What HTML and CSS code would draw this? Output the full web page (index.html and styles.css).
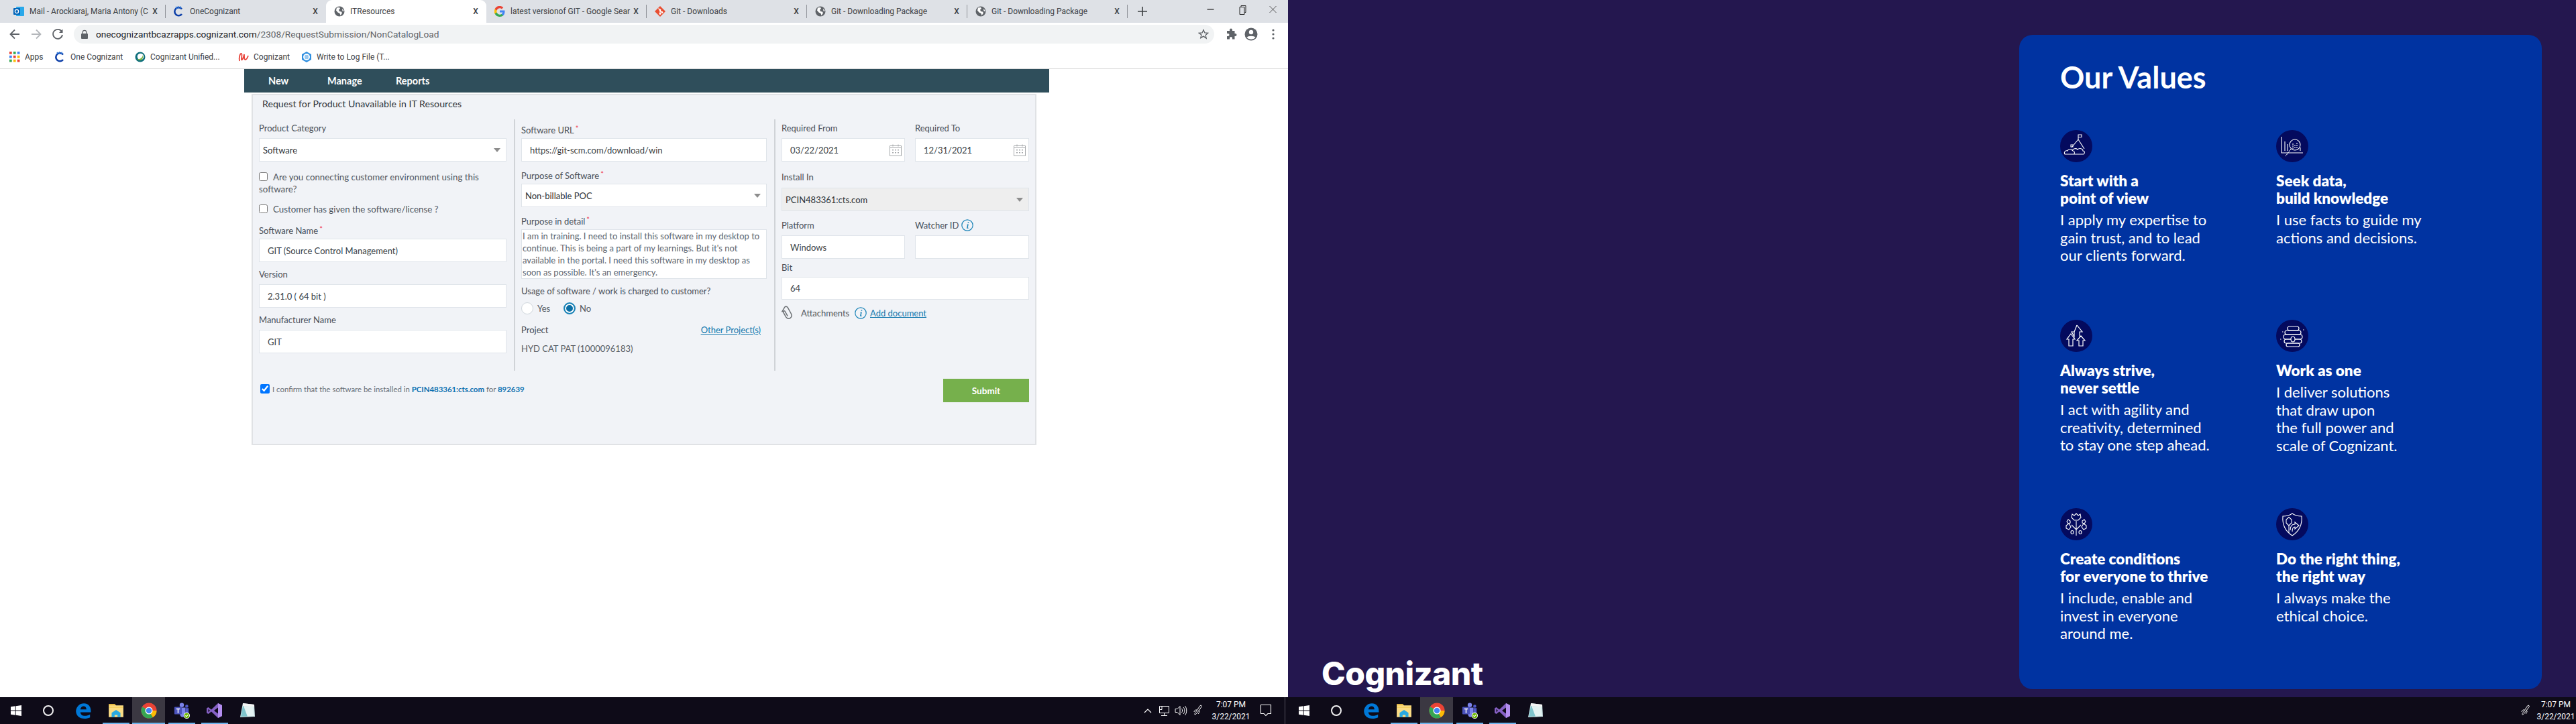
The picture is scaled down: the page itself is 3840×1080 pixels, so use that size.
FILE: index.html
```html
<!DOCTYPE html>
<html lang="en">
<head>
<meta charset="utf-8">
<title>ITResources and Our Values</title>
<link rel="stylesheet" href="styles.css">
</head>
<body>
<svg class="sprite" xmlns="http://www.w3.org/2000/svg">
  <symbol id="globe" viewBox="0 0 16 16"><circle cx="8" cy="8" r="7.5" fill="#5f6368"/><path d="M4 2.5 8 2l1 2-2 1.500 1 2.500 3 .5 1 2-2.500 3.500-1-3-3-1.500L3 6.500zM12 4l2 2 .5 2-2-.5z" fill="#fff"/></symbol>
  <symbol id="cog" viewBox="0 0 16 16"><path d="M12 4.500A6 6 0 1 0 12 12" fill="none" stroke="#0d3fa8" stroke-width="2.600"/><path d="M3 1l2 3M6.500 0l.5 3.500M10.500 .5 9.500 3.500" stroke="#2f7de0" stroke-width="1.400"/></symbol>
  <symbol id="win" viewBox="0 0 16 16"><path d="M0 2.300 6.800 1.300V7.500H0zM7.700 1.200 16 0V7.500H7.700zM0 8.400H6.800V14.700L0 13.700zM7.700 8.400H16V16L7.700 14.800z" fill="#fff"/></symbol>
  <symbol id="edge" viewBox="0 0 20 20"><path d="M1 10.500C1.500 5 5.500 1 11 1c5 0 8.500 3.500 8.500 9.500V12H6.500c.3 3 2.500 4.500 5.500 4.500 2.500 0 4.500-.6 6.500-1.800v3.800c-2 1-4.300 1.500-7 1.500C5.500 20 1 16.500 1 10.500zM6.500 8.500h7.500c0-2.500-1.300-4-3.500-4-2 0-3.600 1.500-4 4z" fill="#0078d7"/></symbol>
  <symbol id="folder" viewBox="0 0 22 20"><path d="M1 1h8l2 2h10v16H1z" fill="#fbdc85"/><path d="M1 1h8l2 2H1z" fill="#e8b93e"/><path d="M1 5h20v1H1z" fill="#f2c94e"/><path d="M5 13l6-4 6 4v6h-4v-3H9v3H5z" fill="#29a9e1"/></symbol>
  <symbol id="chrome" viewBox="0 0 24 24"><circle cx="12" cy="12" r="11.500" fill="#ea4335"/><path d="M12 12 2 17.700A11.500 11.500 0 0 1 2 6.300z" fill="#34a853"/><path d="M2 17.700 12 12l5.800 10A11.500 11.500 0 0 1 2 17.700z" fill="#34a853"/><path d="M12 12h11.500a11.500 11.500 0 0 1-5.700 10z" fill="#fbbc05"/><circle cx="12" cy="12" r="5.500" fill="#fff"/><circle cx="12" cy="12" r="4.200" fill="#4285f4"/></symbol>
  <symbol id="teams" viewBox="0 0 26 26"><circle cx="13" cy="4" r="3.500" fill="#7b83eb"/><circle cx="21" cy="6" r="2.500" fill="#5059c9"/><path d="M10 8h9v11a4.500 4.500 0 0 1-9 0z" fill="#7b83eb"/><path d="M19 9h5v7a3 3 0 0 1-5 2z" fill="#5059c9"/><rect x="1" y="7" width="12" height="12" rx="1" fill="#4b53bc"/><path d="M4 9.500h6v1.500H7.800V17H6.200v-6H4z" fill="#fff"/><circle cx="21" cy="21" r="5" fill="#fff"/><circle cx="21" cy="21" r="4" fill="#6bb700"/><path d="M18.800 21l1.600 1.600 2.800-3" fill="none" stroke="#fff" stroke-width="1.200"/></symbol>
  <symbol id="vs" viewBox="0 0 24 24"><path d="M17 1l6 3v16l-6 3-10-9.500L2.500 17 0 15.500v-7L2.500 7 7 10.500zM17 7.500 11 12l6 4.500zM2.500 9.800v4.400L5 12z" fill="#8661c5"/><path d="M17 1l6 3v16l-6 3z" fill="#b48ef0"/></symbol>
  <symbol id="notes" viewBox="0 0 24 24"><path d="M5 1 22 3 23 21 1 22z" fill="#cfe6e8"/><path d="M5 5 21 6.500 22 20 2 21z" fill="#7fc4cc"/><path d="M6 5 21 6.500 22 20 12 21z" fill="#e3f2f2"/><path d="M5 1 22 3v3.500L5 5z" fill="#f4f4f4"/></symbol>
  <symbol id="pen" viewBox="0 0 16 18"><path d="M11 1.500c1.500-1 3 .5 2 2L6 13c-1 1.300-2.500 2.300-3 1.800-.6-.5.300-2 1.300-3.300zM6 8c-2-.5-4 1-4 3M9 9c2 0 1 3-1 5" fill="none" stroke="#fff" stroke-width="1"/></symbol>
  <symbol id="cal" viewBox="0 0 18 18"><path d="M.5 2.500h17v15H.5z" fill="none" stroke="#a5a8ab"/><path d="M.5 5.500h17M5 .5v3M13 .5v3" stroke="#a5a8ab"/><path d="M4 8h2v1.500H4zM8 8h2v1.500H8zM12 8h2v1.500h-2zM4 12h2v1.500H4zM8 12h2v1.500H8zM12 12h2v1.500h-2z" fill="#a5a8ab"/></symbol>
  <symbol id="info" viewBox="0 0 18 18"><circle cx="9" cy="9" r="8.200" fill="none" stroke="#1b84b8" stroke-width="1.200"/><path d="M9.800 4.200h1.600l-.3 1.600H9.500zM9 7.500h1.800l-1.100 5.200h1.100l-.2 1H7.900l1.100-5.200H8z" fill="#1b84b8"/></symbol>
</svg>

<section class="screen">
  <div class="browser">
    <div class="tabstrip">
      <div class="tab sep">
        <svg class="tab-icon" viewBox="0 0 16 16"><rect x="4" y="1" width="12" height="14" rx="1" fill="#28a8ea"/><rect y="3" width="10" height="10" rx="1" fill="#0364b8"/><circle cx="5" cy="8" r="2.600" fill="none" stroke="#fff" stroke-width="1.300"/></svg>
        <span class="tab-title">Mail - Arockiaraj, Maria Antony (C</span><span class="tab-close">X</span>
      </div>
      <div class="tab">
        <svg class="tab-icon"><use href="#cog"/></svg>
        <span class="tab-title">OneCognizant</span><span class="tab-close">X</span>
      </div>
      <div class="tab active">
        <svg class="tab-icon"><use href="#globe"/></svg>
        <span class="tab-title">ITResources</span><span class="tab-close">X</span>
      </div>
      <div class="tab sep">
        <svg class="tab-icon" viewBox="0 0 16 16"><path d="M15.500 8.200c0-.6 0-1.100-.1-1.600H8v3h4.300a3.700 3.700 0 0 1-1.600 2.400v2h2.600c1.500-1.400 2.200-3.400 2.200-5.800z" fill="#4285f4"/><path d="M8 16c2.200 0 4-.7 5.300-2l-2.600-2c-.7.500-1.600.8-2.700.8-2 0-3.800-1.400-4.400-3.200H.6v2A8 8 0 0 0 8 16z" fill="#34a853"/><path d="M3.600 9.600a4.700 4.700 0 0 1 0-3.100v-2H.6a8 8 0 0 0 0 7.100z" fill="#fbbc05"/><path d="M8 3.200c1.200 0 2.200.4 3 1.200L13.300 2A8 8 0 0 0 .6 4.500l3 2.100C4.200 4.700 6 3.200 8 3.200z" fill="#ea4335"/></svg>
        <span class="tab-title">latest versionof GIT - Google Sear</span><span class="tab-close">X</span>
      </div>
      <div class="tab sep">
        <svg class="tab-icon" viewBox="0 0 16 16"><path d="M8 0l8 8-8 8-8-8z" fill="#e84e31"/><path d="M5.500 3.500 8 6v5M8 7l3 2.500" stroke="#fff" stroke-width="1.200" fill="none"/><circle cx="8" cy="11.500" r="1.400" fill="#fff"/><circle cx="11" cy="9.500" r="1.400" fill="#fff"/><circle cx="8" cy="6" r="1.400" fill="#fff"/></svg>
        <span class="tab-title">Git - Downloads</span><span class="tab-close">X</span>
      </div>
      <div class="tab sep">
        <svg class="tab-icon"><use href="#globe"/></svg>
        <span class="tab-title">Git - Downloading Package</span><span class="tab-close">X</span>
      </div>
      <div class="tab sep">
        <svg class="tab-icon"><use href="#globe"/></svg>
        <span class="tab-title">Git - Downloading Package</span><span class="tab-close">X</span>
      </div>
      <svg class="new-tab" viewBox="0 0 14 14"><path d="M7 0v14M0 7h14" stroke="#3c4043" stroke-width="1.600"/></svg>
      <div class="win-controls">
        <svg class="win-btn" viewBox="0 0 45 28"><path d="M17 14h10" stroke="#222" stroke-width="1.200"/></svg>
        <svg class="win-btn" viewBox="0 0 45 28"><path d="M19.500 10.500h7v11h-7zM21.500 10V8.500h7v10H27" fill="none" stroke="#222"/></svg>
        <svg class="win-btn" viewBox="0 0 45 28"><path d="M18 9l10 10M28 9 18 19" stroke="#444" stroke-width=".9"/></svg>
      </div>
    </div>

    <div class="toolbar">
      <svg class="tb-slot" viewBox="0 0 32 34"><path d="M23 17H10M16 10.500 9.500 17l6.500 6.500" fill="none" stroke="#5f6368" stroke-width="1.800"/></svg>
      <svg class="tb-slot" viewBox="0 0 32 34"><path d="M9 17h13M16 10.500l6.500 6.500-6.500 6.500" fill="none" stroke="#b4b7bb" stroke-width="1.800"/></svg>
      <svg class="tb-slot" viewBox="0 0 32 34"><path d="M22.500 14a7 7 0 1 0 .5 4" fill="none" stroke="#5f6368" stroke-width="1.800"/><path d="M23.500 9.500V15H18z" fill="#5f6368"/></svg>
      <div class="omnibox">
        <svg class="lock" viewBox="0 0 12 14"><rect x="1" y="6" width="10" height="8" rx="1" fill="#5f6368"/><path d="M3.300 6.500V4a2.700 2.700 0 0 1 5.400 0v2.500" fill="none" stroke="#5f6368" stroke-width="1.300"/></svg>
        <span class="url"><span class="url-host">onecognizantbcazrapps.cognizant.com</span>/2308/RequestSubmission/NonCatalogLoad</span>
        <svg class="star" viewBox="0 0 16 16"><path d="M8 1.500l1.900 4.400 4.800.4-3.600 3.100 1.100 4.700L8 11.100l-4.200 2.500 1.100-4.700L1.300 6.300l4.800-.4z" fill="none" stroke="#5f6368" stroke-width="1.300"/></svg>
      </div>
      <svg class="puzzle" viewBox="0 0 30 34"><path d="M10 12h4v-1.500a2 2 0 0 1 4 0V12h3.500v4h1a2 2 0 0 1 0 4h-1v4.500H18V23a2 2 0 0 0-4 0v1.500h-4V20h1.500a2 2 0 0 0 0-4H10z" fill="#5f6368"/></svg>
      <svg class="avatar" viewBox="0 0 32 34"><circle cx="16" cy="17" r="9.500" fill="#5f6368"/><circle cx="16" cy="14" r="3.200" fill="#fff"/><path d="M9.500 22c1.500-3 11.500-3 13 0a9 9 0 0 1-13 0z" fill="#fff"/></svg>
      <svg class="menu" viewBox="0 0 34 34"><circle cx="17" cy="11" r="1.600" fill="#5f6368"/><circle cx="17" cy="17" r="1.600" fill="#5f6368"/><circle cx="17" cy="23" r="1.600" fill="#5f6368"/></svg>
    </div>

    <div class="bookmarks">
      <div class="bm bm-apps">
        <svg class="bm-icon" viewBox="0 0 15 15"><path d="M0 0h3.500v3.500H0z" fill="#ea4335"/><path d="M5.500 0H9v3.500H5.500z" fill="#34a853"/><path d="M11 0h3.500v3.500H11z" fill="#4285f4"/><path d="M0 5.500h3.500V9H0z" fill="#4285f4"/><path d="M5.500 5.500H9V9H5.500z" fill="#ea4335"/><path d="M11 5.500h3.500V9H11z" fill="#fbbc05"/><path d="M0 11h3.500v3.500H0z" fill="#34a853"/><path d="M5.500 11H9v3.500H5.500z" fill="#fbbc05"/><path d="M11 11h3.500v3.500H11z" fill="#ea4335"/></svg>
        <span>Apps</span>
      </div>
      <div class="bm bm-one"><svg class="bm-icon"><use href="#cog"/></svg><span>One Cognizant</span></div>
      <div class="bm bm-unified">
        <svg class="bm-icon" viewBox="0 0 16 16"><circle cx="8" cy="8" r="7.500" fill="#0f6f7c"/><circle cx="8.500" cy="7.500" r="4.800" fill="#fff"/><path d="M4 11c3 1 7-1 8-6 1 4-1 8-4 8s-4-1-4-2z" fill="#7bb642"/></svg>
        <span>Cognizant Unified...</span>
      </div>
      <div class="bm bm-cog">
        <svg class="bm-icon" viewBox="0 0 16 16"><path d="M2 14C1 8 3 2 5 3c1.500 1-.5 7 0 9 .5 1.500 3-2 4-8 0 5 0 8 1.500 8S14 9 15 6" fill="none" stroke="#e8453c" stroke-width="1.800"/></svg>
        <span>Cognizant</span>
      </div>
      <div class="bm bm-log">
        <svg class="bm-icon" viewBox="0 0 16 16"><path d="M8 0l7 4v8l-7 4-7-4V4z" fill="#2f8fe0"/><circle cx="8" cy="8" r="5" fill="#fff"/><path d="M5 8h6M5.500 6h5M5.500 10h5" stroke="#2f8fe0"/></svg>
        <span>Write to Log File (T...</span>
      </div>
    </div>

    <nav class="appnav">
      <a class="nav-new">New</a>
      <a class="nav-manage">Manage</a>
      <a>Reports</a>
    </nav>

    <main class="panel">
      <h2 class="panel-title">Request for Product Unavailable in IT Resources</h2>
      <div class="cols">
        <div class="col col-first">
          <label class="lbl">Product Category</label>
          <div class="field select">Software</div>
          <div class="check-line first-check"><input type="checkbox" class="chk"><span class="check-gap">Are you connecting customer environment using this</span><br>software?</div>
          <div class="check-line second-check"><input type="checkbox" class="chk"><span class="check-gap">Customer has given the software/license ?</span></div>
          <label class="lbl gap-7">Software Name<i class="req">*</i></label>
          <div class="field">GIT (Source Control Management)</div>
          <label class="lbl gap-5">Version</label>
          <div class="field">2.31.0 ( 64 bit )</div>
          <label class="lbl gap-5">Manufacturer Name</label>
          <div class="field">GIT</div>
        </div>

        <div class="col col-mid">
          <label class="lbl">Software URL<i class="req">*</i></label>
          <div class="field">https://git-scm.com/download/win</div>
          <label class="lbl gap-5">Purpose of Software<i class="req">*</i></label>
          <div class="field select">Non-billable POC</div>
          <label class="lbl gap-5">Purpose in detail<i class="req">*</i></label>
          <div class="detail">I am in training. I need to install this software in my desktop to continue. This is being a part of my learnings. But it's not available in the portal. I need this software in my desktop as soon as possible. It's an emergency.</div>
          <label class="lbl gap-5">Usage of software / work is charged to customer?</label>
          <div class="radios">
            <span class="radio"></span><span class="radio-text">Yes</span>
            <span class="radio on"></span><span class="radio-text">No</span>
          </div>
          <div class="project-row"><span>Project</span><a class="link">Other Project(s)</a></div>
          <div class="project-name">HYD CAT PAT (1000096183)</div>
        </div>

        <div class="col col-last">
          <div class="pair">
            <div class="half-a">
              <label class="lbl">Required From</label>
              <div class="field date">03/22/2021<svg class="cal"><use href="#cal"/></svg></div>
            </div>
            <div class="half-b">
              <label class="lbl">Required To</label>
              <div class="field date">12/31/2021<svg class="cal"><use href="#cal"/></svg></div>
            </div>
          </div>
          <label class="lbl install-lbl">Install In</label>
          <div class="field select disabled">PCIN483361:cts.com</div>
          <div class="pair gap-8">
            <div class="half-a">
              <label class="lbl">Platform</label>
              <div class="field">Windows</div>
            </div>
            <div class="half-b">
              <label class="lbl">Watcher ID <svg class="info"><use href="#info"/></svg></label>
              <div class="field"></div>
            </div>
          </div>
          <label class="lbl bit-lbl">Bit</label>
          <div class="field bit">64</div>
          <div class="attach">
            <svg class="clip" viewBox="0 0 18 22"><path d="M3 8l5.500-6c1.500-1.500 4-.3 4.500 1.500l3 10c.7 2.500-.5 5-2.500 6-2.500 1-5 0-6-2.500L5 9c-.5-1.500 2-2.500 2.700-1l2.500 8" fill="none" stroke="#6b6f73" stroke-width="1.500" transform="rotate(-12 9 11)"/></svg>
            <span class="attach-text">Attachments</span>
            <svg class="info attach-info"><use href="#info"/></svg>
            <a class="link">Add document</a>
          </div>
        </div>
      </div>

      <div class="panel-foot">
        <div class="confirm">
          <input type="checkbox" class="chk-on" checked>
          <span>I confirm that the software be installed in <b class="hl">PCIN483361:cts.com</b> for <b class="hl">892639</b></span>
        </div>
        <button class="submit" type="button">Submit</button>
      </div>
    </main>
  </div>

  <footer class="taskbar">
    <div class="tb-app start"><svg class="i-win"><use href="#win"/></svg></div>
    <div class="tb-app cortana"><span class="ring"></span></div>
    <div class="tb-app tb-first"><svg class="i-app"><use href="#edge"/></svg></div>
    <div class="tb-app open"><svg class="i-app"><use href="#folder"/></svg></div>
    <div class="tb-app current"><svg class="i-app"><use href="#chrome"/></svg></div>
    <div class="tb-app open"><svg class="i-app"><use href="#teams"/></svg></div>
    <div class="tb-app open"><svg class="i-app"><use href="#vs"/></svg></div>
    <div class="tb-app"><svg class="i-app"><use href="#notes"/></svg></div>
    <div class="tray">
      <svg class="tray-i" viewBox="0 0 24 20"><path d="M7 13l5-5 5 5" fill="none" stroke="#fff" stroke-width="1.200"/></svg>
      <svg class="tray-i" viewBox="0 0 24 20"><path d="M5.500 3.500h14v10h-14zM9 3.500v5H5.500M12.500 13.500v4M8 17.500h9" fill="none" stroke="#fff"/></svg>
      <svg class="tray-i" viewBox="0 0 24 20"><path d="M5 7.500h3l4-4v13l-4-4H5zM14.500 7c1.500 2 1.500 4 0 6M17 5c2.500 3 2.500 7 0 10M19.500 3c3 4 3 10 0 14" fill="none" stroke="#fff"/></svg>
      <svg class="tray-pen"><use href="#pen"/></svg>
      <div class="clock"><span>7:07 PM</span><span>3/22/2021</span></div>
      <svg class="tray-note" viewBox="0 0 36 22"><path d="M10.500 2.500h15v13h-4.500l-3 3-3-3h-4.500z" fill="none" stroke="#fff" stroke-width="1.100"/></svg>
      <span class="desktop-sep"></span>
    </div>
  </footer>
</section>

<section class="screen">
  <div class="slide">
    <div class="logo">Cognizant</div>
    <article class="card">
      <h1 class="card-title">Our Values</h1>
      <div class="values">
        <div class="value">
          <svg class="badge" viewBox="0 0 48 48"><circle cx="24" cy="24" r="24" fill="#040a5e"/><g fill="none" stroke="#fff" stroke-width="1.100"><path d="M27 14V7h5v3.500h-5M27 14l9 14M27 14 17 26M19 25h-3v-3h3z"/><path d="M7 36c-2-3 1-6 4-5 1-3 6-3 8 0 2 0 3 2 2 5zM18 31c1-4 6-4 8-2 3-3 8-1 8 2 3 0 3 4 1 5H21"/></g></svg>
          <h3>Start with a<br>point of view</h3>
          <p>I apply my expertise to<br>gain trust, and to lead<br>our clients forward.</p>
        </div>
        <div class="value">
          <svg class="badge" viewBox="0 0 48 48"><circle cx="24" cy="24" r="24" fill="#040a5e"/><g fill="none" stroke="#fff" stroke-width="1.100"><path d="M8 10v24h32M13 17v14M17 21v10M36 26v5"/><circle cx="28" cy="22" r="8"/><path d="M22 28 14 39M25 20v8M28 22v6M31 19v9" stroke-dasharray="2 1"/></g></svg>
          <h3>Seek data,<br>build knowledge</h3>
          <p>I use facts to guide my<br>actions and decisions.</p>
        </div>
        <div class="value">
          <svg class="badge" viewBox="0 0 48 48"><circle cx="24" cy="24" r="24" fill="#040a5e"/><g fill="none" stroke="#fff" stroke-width="1.200"><path d="M25 8l8 10h-4v7M21 25v-7h-4zM21 18l4-10"/><path d="M16 21l6 8h-3v10h-6V29h-3zM31 24l6 7h-3v8h-6v-8h-3z"/></g></svg>
          <h3>Always strive,<br>never settle</h3>
          <p>I act with agility and<br>creativity, determined<br>to stay one step ahead.</p>
        </div>
        <div class="value">
          <svg class="badge" viewBox="0 0 48 48"><circle cx="24" cy="24" r="24" fill="#040a5e"/><g fill="none" stroke="#fff" stroke-width="1.200"><rect x="17" y="10" width="17" height="6" rx="3"/><rect x="13" y="16" width="24" height="6" rx="3"/><rect x="11" y="22" width="28" height="7" rx="3.500"/><rect x="12" y="29" width="26" height="6" rx="3"/><rect x="15" y="35" width="20" height="5" rx="2.500"/><ellipse cx="25" cy="29" rx="3" ry="4" fill="#040a5e"/></g><path d="M40 15h1.500M9 18h1.500M6 29h1.500" stroke="#fff"/></svg>
          <h3>Work as one</h3>
          <p>I deliver solutions<br>that draw upon<br>the full power and<br>scale of Cognizant.</p>
        </div>
        <div class="value">
          <svg class="badge" viewBox="0 0 48 48"><circle cx="24" cy="24" r="24" fill="#040a5e"/><g fill="none" stroke="#fff" stroke-width="1.100"><path d="M24 19v22M24 32l-7-7M24 32l7-7"/><path d="M24 8l3 3 3-2 1 5-4 4h-6l-4-4 1-5 3 2z"/><path d="M12 17l3 2v3l-3 1-2-3zM36 17l-3 2v3l3 1 2-3zM9 26l4-3 3 5-3 4-4-2zM39 26l-4-3-3 5 3 4 4-2z"/><ellipse cx="18" cy="36" rx="2" ry="2.500"/><ellipse cx="30" cy="36" rx="2" ry="2.500"/></g></svg>
          <h3>Create conditions<br>for everyone to thrive</h3>
          <p>I include, enable and<br>invest in everyone<br>around me.</p>
        </div>
        <div class="value">
          <svg class="badge" viewBox="0 0 48 48"><circle cx="24" cy="24" r="24" fill="#040a5e"/><g fill="none" stroke="#fff" stroke-width="1.100"><path d="M24 8c4 3 9 4 14 4 1 12-3 22-14 29C13 34 9 24 10 12c5 0 10-1 14-4z"/><path d="M19 37V26l-4-4v-5l4-3.500 4 3.500v5l-4 4M21 33c0-6 3-9 7-9v-3l6 5-6 5v-3c-2 0-4 2-4 7"/></g></svg>
          <h3>Do the right thing,<br>the right way</h3>
          <p>I always make the<br>ethical choice.</p>
        </div>
      </div>
    </article>
  </div>

  <footer class="taskbar">
    <div class="tb-app start"><svg class="i-win"><use href="#win"/></svg></div>
    <div class="tb-app cortana"><span class="ring"></span></div>
    <div class="tb-app tb-first"><svg class="i-app"><use href="#edge"/></svg></div>
    <div class="tb-app open"><svg class="i-app"><use href="#folder"/></svg></div>
    <div class="tb-app current"><svg class="i-app"><use href="#chrome"/></svg></div>
    <div class="tb-app open"><svg class="i-app"><use href="#teams"/></svg></div>
    <div class="tb-app open"><svg class="i-app"><use href="#vs"/></svg></div>
    <div class="tb-app"><svg class="i-app"><use href="#notes"/></svg></div>
    <div class="tray">
      <svg class="tray-pen"><use href="#pen"/></svg>
      <div class="clock clock-edge"><span>7:07 PM</span><span>3/22/2021</span></div>
    </div>
  </footer>
</section>
</body>
</html>
```

FILE: styles.css
```css
* { box-sizing: border-box; }
html, body { margin: 0; padding: 0; }
body {
  width: 3840px;
  height: 1080px;
  display: flex;
  overflow: hidden;
  font-family: "Roboto", "Liberation Sans", sans-serif;
  background: #fff;
}
.sprite { display: none; }
.screen { width: 1920px; height: 1080px; display: flex; flex-direction: column; flex: none; }

/* browser */
.browser { flex: 1; background: #fff; min-height: 0; }
.tabstrip { height: 34px; background: #dee1e6; display: flex; align-items: center; padding-left: 8px; }
.tab { width: 239px; height: 34px; display: flex; align-items: center; padding-left: 12px; flex: none; font-size: 12px; color: #3c4043; }
.tab::after { content: ""; width: 1px; height: 20px; margin-left: 7px; }
.tab.sep::after { background: #8f9298; }
.tab.active { background: #fff; border-radius: 9px 9px 0 0; }
.tab-icon { width: 16px; height: 16px; flex: none; margin-right: 8px; }
.tab-title { flex: 1; overflow: hidden; white-space: nowrap; min-width: 0; }
.tab-close { width: 16px; text-align: center; font-size: 12px; color: #3c4043; font-weight: 500; flex: none; }
.new-tab { width: 14px; height: 14px; margin-left: 15px; flex: none; }
.win-controls { margin-left: auto; display: flex; align-self: flex-start; }
.win-btn { width: 46px; height: 28px; display: block; }

.toolbar { height: 34px; display: flex; align-items: center; padding-left: 6px; }
.tb-slot { width: 32px; height: 34px; flex: none; }
.omnibox { width: 1700px; height: 28px; margin-left: 8px; border-radius: 14px; background: #f1f3f4; display: flex; align-items: center; padding: 0 8px 0 10px; flex: none; }
.lock { width: 12px; height: 14px; flex: none; margin-right: 11px; }
.url { font-size: 13.7px; color: #5f6368; white-space: nowrap; }
.url-host { color: #202124; }
.star { width: 16px; height: 16px; margin-left: auto; flex: none; }
.puzzle { width: 30px; height: 34px; margin-left: 9px; flex: none; }
.avatar { width: 32px; height: 34px; flex: none; }
.menu { width: 34px; height: 34px; flex: none; }

.bookmarks { height: 35px; border-bottom: 1px solid #dcdcdc; display: flex; align-items: center; padding-left: 14px; font-size: 12px; color: #3c4043; }
.bm { display: flex; align-items: center; gap: 7px; flex: none; white-space: nowrap; }
.bm-icon { width: 16px; height: 16px; flex: none; }
.bm-apps { width: 68px; }
.bm-one { width: 119px; }
.bm-unified { width: 154px; }
.bm-cog { width: 94px; }

.appnav { width: 1200px; height: 35px; margin-left: 364px; background: #2f4e5b; display: flex; align-items: center; padding-left: 36px; font: 700 14.5px "Lato", sans-serif; color: #fff; }
.nav-new { width: 88px; }
.nav-manage { width: 102px; }

/* form panel */
.panel { width: 1170px; height: 524px; margin: 2px 0 0 375px; background: #f1f3f7; border: 2px solid #e0e2e5; padding: 0 9px; font-family: "Lato", sans-serif; color: #444a52; font-size: 13px; }
.panel-title { margin: 0 0 10px 5px; height: 26px; line-height: 26px; font-size: 14.2px; font-weight: 400; color: #30363c; }
.cols { display: flex; height: 375px; }
.col { flex: none; }
.col-first { width: 382px; padding-right: 11px; border-right: 2px solid #d0d3d7; }
.col-mid { width: 388px; padding: 0 11px 0 9px; border-right: 2px solid #d0d3d7; }
.col-last { width: 378px; padding-left: 9px; }

.lbl { display: block; height: 28px; line-height: 27px; font-size: 13px; color: #494f57; white-space: nowrap; }
.gap-5 { margin-top: 5px; }
.gap-7 { margin-top: 7px; }
.gap-8 { margin-top: 8px; }
.req { color: #f0304a; font-style: normal; font-size: 11px; margin-left: 2px; vertical-align: 3px; }

.field { height: 35px; border: 1px solid #dfe4ea; background: #fff; padding-left: 12px; display: flex; align-items: center; font-size: 13px; color: #3a3f45; white-space: nowrap; }
.select { padding: 0 8px 0 5px; justify-content: space-between; color: #2e3338; }
.select::after { content: ""; border: 5px solid transparent; border-top: 6px solid #8d8d8d; border-bottom: 0; }
.disabled { background: #eeeeee; margin-top: 1px; }
.date { justify-content: space-between; padding-right: 4px; }
.cal { width: 18px; height: 18px; flex: none; }
.bit { height: 34px; }

.check-line { line-height: 18px; font-size: 13.3px; color: #50565e; white-space: nowrap; }
.first-check { margin-top: 14px; }
.second-check { margin-top: 12px; }
.chk { width: 13px; height: 13px; margin: 0 8px 0 0; vertical-align: -1px; }
.chk-on { width: 14px; height: 14px; margin: 0 4px 0 2px; flex: none; }

.detail { height: 74px; background: #fff; border: 1px solid #dfe4ea; padding: 0 1px; font-size: 13px; line-height: 18px; color: #5c6670; }
.radios { display: flex; align-items: center; height: 18px; margin-top: 2px; }
.radio { width: 18px; height: 18px; border-radius: 50%; background: #fff; border: 1px solid #cfd6dc; flex: none; }
.radio.on { border: 2px solid #1b84b8; box-shadow: inset 0 0 0 2px #fff; background: #0a6ea5; }
.radio-text { margin: 0 20px 0 6px; font-size: 13px; color: #50565e; width: 19px; }
.radio-text:last-child { margin-right: 0; }
.project-row { display: flex; justify-content: space-between; height: 24px; line-height: 24px; margin-top: 11px; padding-right: 9px; color: #444a52; }
.project-name { height: 20px; line-height: 20px; margin-top: 6px; color: #555b63; }
.link { color: #1077ad; text-decoration: underline; }

.pair { display: flex; }
.half-a { width: 184px; margin-right: 15px; flex: none; }
.half-b { width: 170px; flex: none; }
.install-lbl { margin-top: 10px; }
.bit-lbl { height: 27px; line-height: 26px; }
.info { width: 18px; height: 18px; vertical-align: -4px; }
.attach { display: flex; align-items: center; height: 20px; margin-top: 10px; margin-left: -2px; }
.clip { width: 18px; height: 22px; flex: none; margin-right: 13px; }
.attach-text { width: 80px; color: #50565e; }
.attach-info { flex: none; margin-right: 5px; }

.panel-foot { display: flex; justify-content: space-between; margin-top: 12px; align-items: center; }
.confirm { display: flex; align-items: center; font-size: 11.4px; color: #6a7078; margin-bottom: 5px; }
.hl { color: #0c70b0; font-weight: 700; }
.submit { width: 128px; height: 35px; border: 0; background: #76b04c; color: #fff; font: 700 13.5px "Lato", sans-serif; }

/* slide */
.slide { flex: 1; min-height: 0; background: #24174f; display: flex; color: #fff; }
.logo { font: 800 48px/50px "Inter", sans-serif; letter-spacing: -.5px; color: #fff; align-self: flex-end; margin: 0 0 10px 50px; width: 240px; }
.card { width: 779px; height: 976px; margin: 52px 0 0 800px; background: #0033a1; border-radius: 20px; padding: 33px 0 0 61px; font-family: "Lato", sans-serif; flex: none; }
.card-title { margin: 0 0 49px; height: 60px; font-size: 45px; line-height: 60px; font-weight: 700; }
.values { display: grid; grid-template-columns: 322px 322px; grid-template-rows: 283px 281px 200px; }
.badge { width: 48px; height: 48px; display: block; }
.value h3 { margin: 15px 0 0; font-size: 22.5px; line-height: 26px; font-weight: 800; }
.value p { margin: 6px 0 0; font-size: 22px; line-height: 26.5px; font-weight: 400; }

/* taskbar */
.taskbar { height: 40px; flex: none; background: #0e0b18; display: flex; color: #fff; }
.tb-app { width: 49px; height: 40px; display: flex; align-items: center; justify-content: center; flex: none; }
.start { width: 48px; }
.cortana { width: 48px; }
.tb-first { margin-left: 3px; }
.open { background: linear-gradient(#6cb4ec, #6cb4ec) no-repeat center bottom / 40px 2px; }
.current { background: #3b3842 linear-gradient(#6cb4ec, #6cb4ec) no-repeat center bottom / 100% 2px; }
.i-win { width: 16px; height: 16px; }
.i-app { width: 24px; height: 24px; }
.ring { width: 16px; height: 16px; border-radius: 50%; border: 2.500px solid #f2f2f2; }
.tray { margin-left: auto; display: flex; align-items: center; flex: none; }
.tray-i { width: 24px; height: 20px; flex: none; }
.tray-pen { width: 16px; height: 18px; margin: 0 7px; flex: none; }
.clock { width: 68px; display: flex; flex-direction: column; align-items: center; font-size: 12px; line-height: 18px; flex: none; }
.clock-edge { width: 60px; }
.tray-note { width: 36px; height: 22px; flex: none; }
.desktop-sep { width: 1px; height: 40px; background: #55525e; margin: 0 4px 0 10px; flex: none; }
```
